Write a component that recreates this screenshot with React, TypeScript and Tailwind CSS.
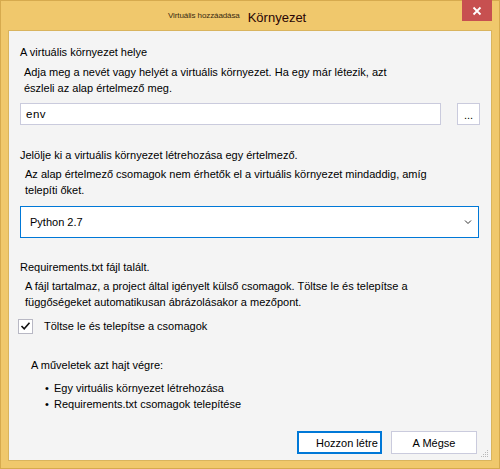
import React from "react";

export default function App() {
  return (
    <div className="relative w-[500px] h-[469px] bg-[#f0c86c] border border-[#d6aa4e] flex flex-col px-[7px] pb-[7px] font-['Liberation_Sans',Arial,sans-serif] text-black">
      <div className="absolute top-[-1px] right-[7px] w-[30px] h-[21px] bg-[#c75050] flex items-center justify-center">
        <svg width="10" height="10" viewBox="0 0 10 10">
          <path d="M1.5 1.5 L8.5 8.5 M8.5 1.5 L1.5 8.5" stroke="#ffffff" strokeWidth="1.8" />
        </svg>
      </div>
      <div className="h-[29px] flex items-start pl-[160px]">
        <span className="mt-[10px] text-[8px] leading-[10px] text-[#3a2a10] tracking-[-0.1px]">Virtuális hozzáadása</span>
        <span className="ml-[8px] mt-[9px] text-[13px] leading-[16px] text-[#2a0606]">Környezet</span>
      </div>
      <div className="relative flex-1 bg-[#f4f4f4] border border-[#d9b45e] pl-[11px] flex flex-col text-[11px] leading-[16px]">
        <div className="mt-[13px]">A virtuális környezet helye</div>
        <div className="mt-[4px] pl-[4px]">
          Adja meg a nevét vagy helyét a virtuális környezet. Ha egy már létezik, azt
          <br />
          észleli az alap értelmező meg.
        </div>
        <div className="mt-[7px] flex items-center">
          <div className="w-[421px] h-[22px] bg-white border border-[#cacbdd] flex items-center pl-[5px] text-[11.5px] tracking-[0.5px]">env</div>
          <div className="ml-[16px] w-[23px] h-[22px] bg-white border border-[#cacbdd] flex items-center justify-center text-[11px] leading-none pt-[3px]">...</div>
        </div>
        <div className="mt-[22px]">Jelölje ki a virtuális környezet létrehozása egy értelmező.</div>
        <div className="mt-[3px] pl-[5px]">
          Az alap értelmező csomagok nem érhetők el a virtuális környezet mindaddig, amíg
          <br />
          telepíti őket.
        </div>
        <div className="mt-[8px] w-[459px] h-[32px] bg-white border border-[#0078d7] flex items-center justify-between pl-[9px] pr-[6px]">
          <span>Python 2.7</span>
          <svg width="8" height="6" viewBox="0 0 8 6">
            <path d="M1 1.5 L4 4.5 L7 1.5" stroke="#333" strokeWidth="1" fill="none" />
          </svg>
        </div>
        <div className="mt-[21px]">Requirements.txt fájl talált.</div>
        <div className="mt-[3px] pl-[5px]">
          A fájl tartalmaz, a project által igényelt külső csomagok. Töltse le és telepítse a
          <br />
          függőségeket automatikusan ábrázolásakor a mezőpont.
        </div>
        <div className="mt-[8px] flex items-center h-[16px]">
          <div className="-ml-[2px] w-[15px] h-[15px] bg-white border border-[#b8b8c4] flex items-center justify-center">
            <svg width="11" height="10" viewBox="0 0 11 10">
              <path d="M1.5 5 L4.2 7.8 L9.5 1.8" stroke="#111" strokeWidth="1.6" fill="none" />
            </svg>
          </div>
          <span className="ml-[11px]">Töltse le és telepítse a csomagok</span>
        </div>
        <div className="mt-[23px] pl-[11px]">A műveletek azt hajt végre:</div>
        <div className="mt-[7px] pl-[25px] flex flex-col">
          <div className="flex"><span className="w-[9px]">•</span><span>Egy virtuális környezet létrehozása</span></div>
          <div className="flex"><span className="w-[9px]">•</span><span>Requirements.txt csomagok telepítése</span></div>
        </div>
        <div className="mt-[19px] flex pl-[277px]">
          <div className="w-[85px] h-[23px] bg-white border-2 border-[#0078d7] flex items-center pl-[17px] whitespace-nowrap">Hozzon létre</div>
          <div className="ml-[9px] w-[86px] h-[23px] bg-white border border-[#cacbdd] flex items-center justify-center">A Mégse</div>
        </div>
        <svg className="absolute right-[2px] bottom-[2px]" width="10" height="10" viewBox="0 0 10 10">
          <rect x="8" y="2" width="1" height="1" fill="#b8b8b8" />
          <rect x="6" y="4" width="1" height="1" fill="#b8b8b8" />
          <rect x="8" y="4" width="1" height="1" fill="#b8b8b8" />
          <rect x="4" y="6" width="1" height="1" fill="#b8b8b8" />
          <rect x="6" y="6" width="1" height="1" fill="#b8b8b8" />
          <rect x="8" y="6" width="1" height="1" fill="#b8b8b8" />
          <rect x="2" y="8" width="1" height="1" fill="#b8b8b8" />
          <rect x="4" y="8" width="1" height="1" fill="#b8b8b8" />
          <rect x="6" y="8" width="1" height="1" fill="#b8b8b8" />
          <rect x="8" y="8" width="1" height="1" fill="#b8b8b8" />
        </svg>
      </div>
    </div>
  );
}
